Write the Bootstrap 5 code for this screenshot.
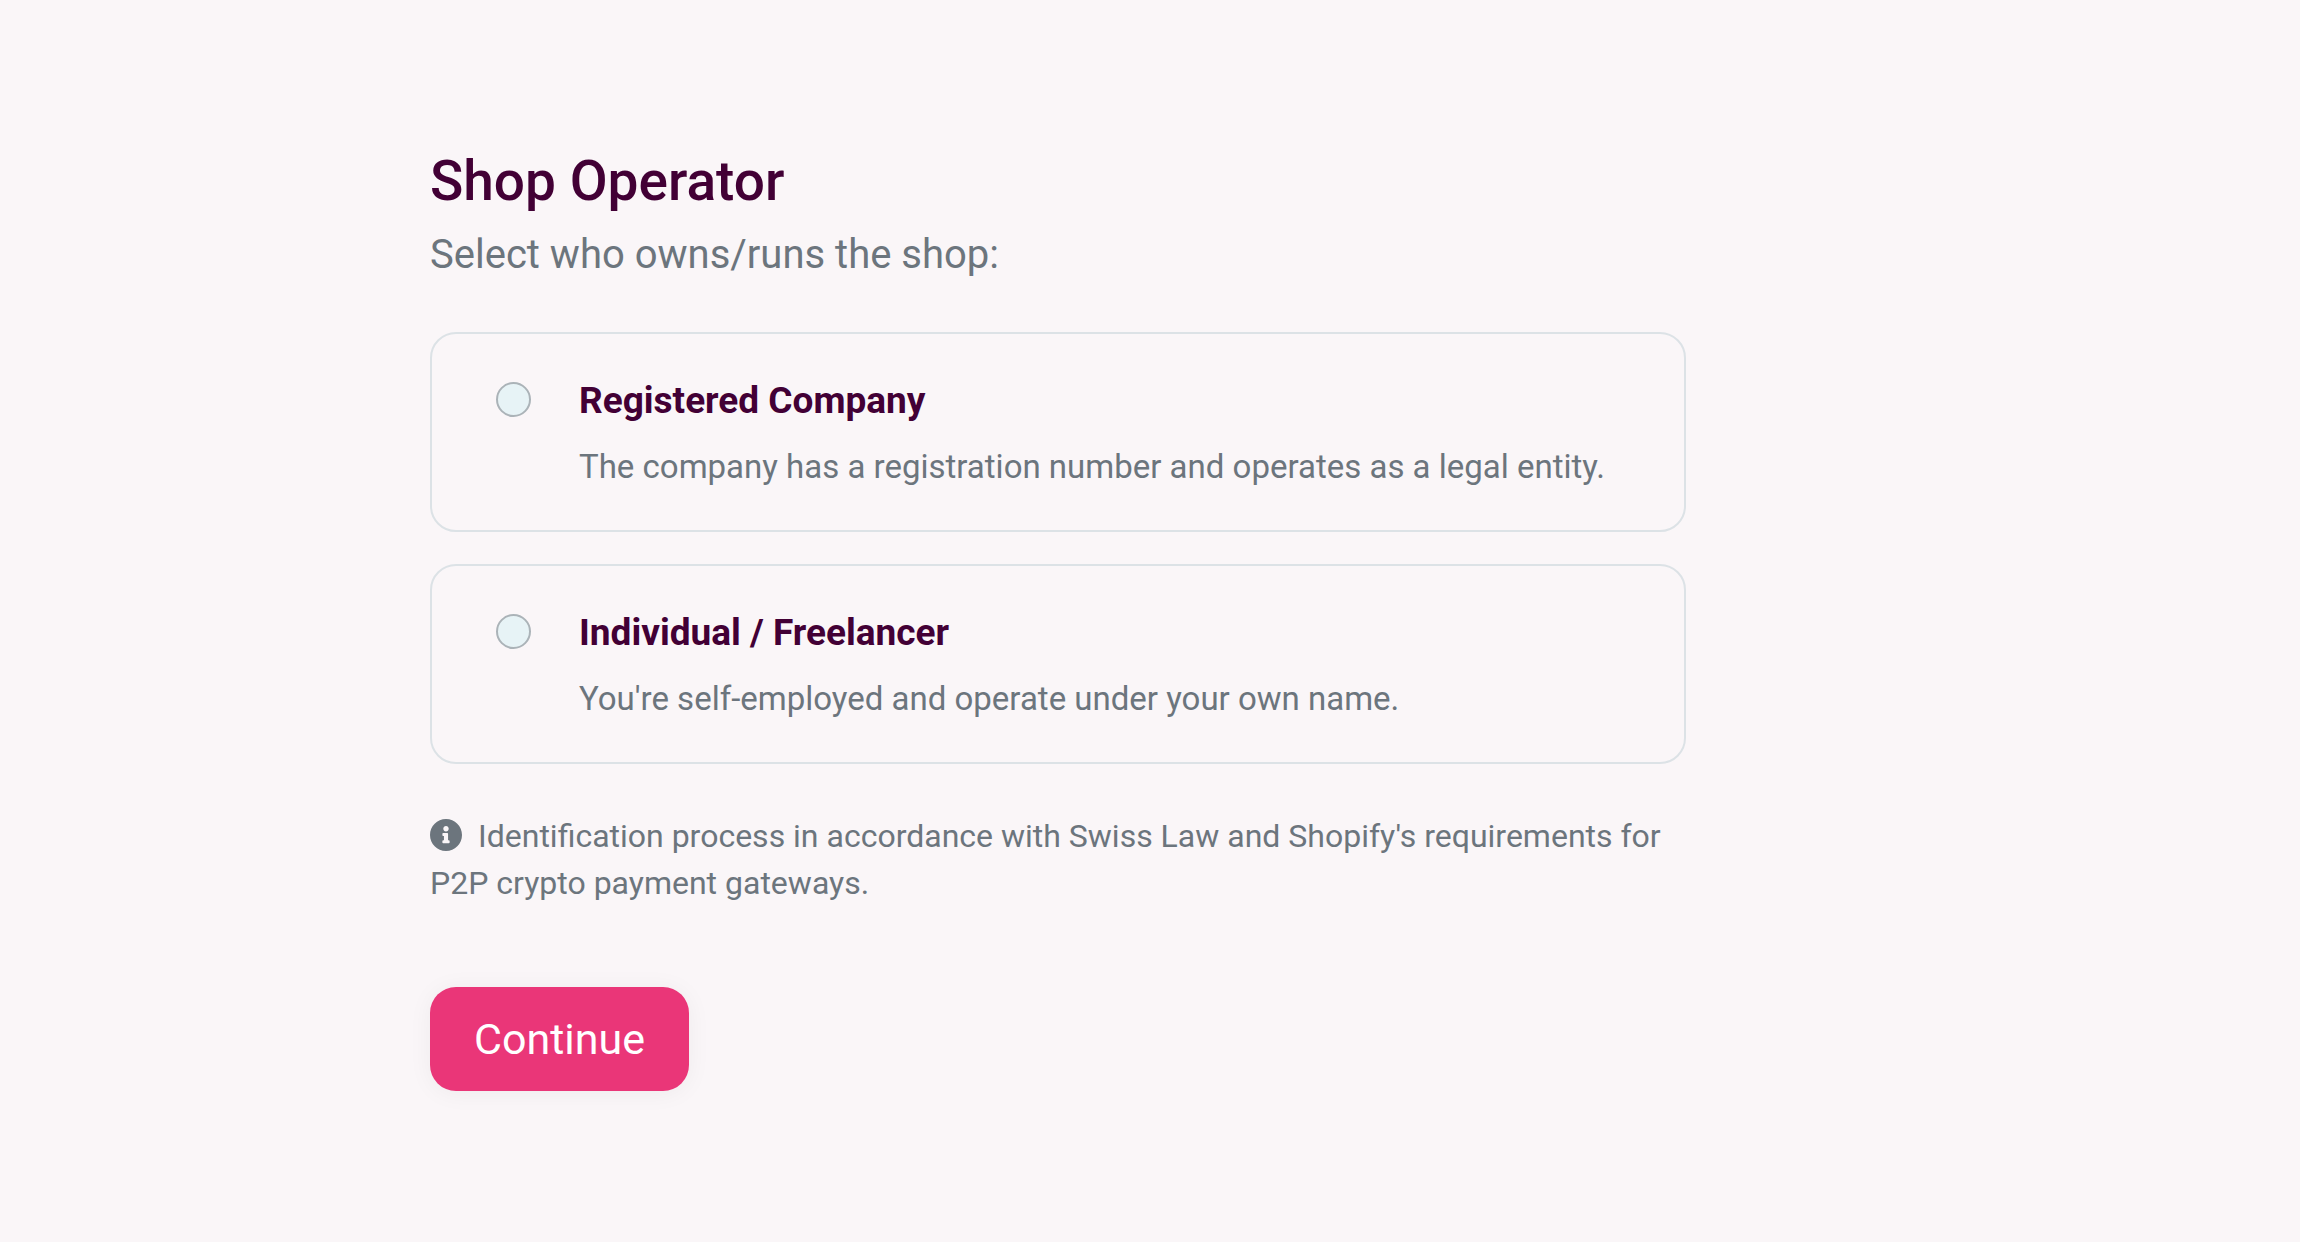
<!DOCTYPE html>
<html lang="en">
<head>
<meta charset="utf-8">
<meta name="viewport" content="width=device-width, initial-scale=1">
<title>Shop Operator</title>
<link href="https://cdn.jsdelivr.net/npm/bootstrap@5.3.0/dist/css/bootstrap.min.css" rel="stylesheet">
<style>
  body { background: #faf6f8; color: #6c757d; font-family: Roboto, "Noto Sans", sans-serif; font-size: 32px; line-height: 47px; }
  .page-wrap { max-width: 1440px; padding-top: 148px; padding-bottom: 148px; }
  .operator-form { max-width: 1256px; }
  .page-title { color: #420035; font-size: 55px; line-height: 66px; font-weight: 500; margin-bottom: 12px; }
  .page-intro { font-size: 40px; line-height: 58px; margin-bottom: 48px; }
  .option-box { border: 2px solid #dce2e6; border-radius: 26px; padding: 44px 64px 40px; gap: 48px; cursor: pointer; }
  .option-box .form-check-input { width: 35px; height: 35px; margin: 4px 0 0; border: 2px solid #abb3b8; background-color: #e7f3f6; }
  .option-title { color: #420035; font-size: 37px; line-height: 46px; font-weight: 700; margin-bottom: 19px; }
  .option-text { font-size: 33px; }
  .option-stack { gap: 32px; margin-bottom: 49px; }
  .info-note { margin-bottom: 80px; }
  .info-icon { width: 32px; height: 32px; margin-right: 16px; vertical-align: -4px; }
  .btn-continue { --bs-btn-color: #fff; --bs-btn-hover-color: #fff; --bs-btn-active-color: #fff; --bs-btn-bg: #ea3678; --bs-btn-hover-bg: #d92a6a; --bs-btn-active-bg: #c9225f; font-size: 43px; line-height: 64px; border: 0; border-radius: 26px; padding: 20px 44px; box-shadow: 0 2px 24px rgba(0, 0, 0, .05); }
</style>
</head>
<body>
<main class="container-fluid page-wrap px-0">
  <form class="operator-form">
    <h1 class="page-title">Shop Operator</h1>
    <p class="page-intro" id="intro">Select who owns/runs the shop:</p>
    <div class="d-flex flex-column option-stack" role="radiogroup" aria-labelledby="intro">
      <label class="option-box d-flex align-items-start" for="company">
        <input class="form-check-input flex-shrink-0" type="radio" name="operator" id="company">
        <span class="d-block">
          <span class="option-title d-block">Registered Company</span>
          <span class="option-text d-block">The company has a registration number and operates as a legal entity.</span>
        </span>
      </label>
      <label class="option-box d-flex align-items-start" for="individual">
        <input class="form-check-input flex-shrink-0" type="radio" name="operator" id="individual">
        <span class="d-block">
          <span class="option-title d-block">Individual / Freelancer</span>
          <span class="option-text d-block">You're self-employed and operate under your own name.</span>
        </span>
      </label>
    </div>
    <p class="info-note"><svg class="info-icon" viewBox="8 8 496 496" aria-hidden="true"><path fill="currentColor" d="M256 8C119 8 8 119 8 256s111 248 248 248 248-111 248-248S393 8 256 8zm0 110c23 0 42 19 42 42s-19 42-42 42-42-19-42-42 19-42 42-42zm56 254c0 7-5 12-12 12h-88c-7 0-12-5-12-12v-24c0-7 5-12 12-12h12v-64h-12c-7 0-12-5-12-12v-24c0-7 5-12 12-12h64c7 0 12 5 12 12v100h12c7 0 12 5 12 12v24z"/></svg>Identification process in accordance with Swiss Law and Shopify's requirements for P2P crypto payment gateways.</p>
    <button class="btn btn-continue" type="submit">Continue</button>
  </form>
</main>
<script src="https://cdn.jsdelivr.net/npm/bootstrap@5.3.0/dist/js/bootstrap.bundle.min.js"></script>
</body>
</html>
